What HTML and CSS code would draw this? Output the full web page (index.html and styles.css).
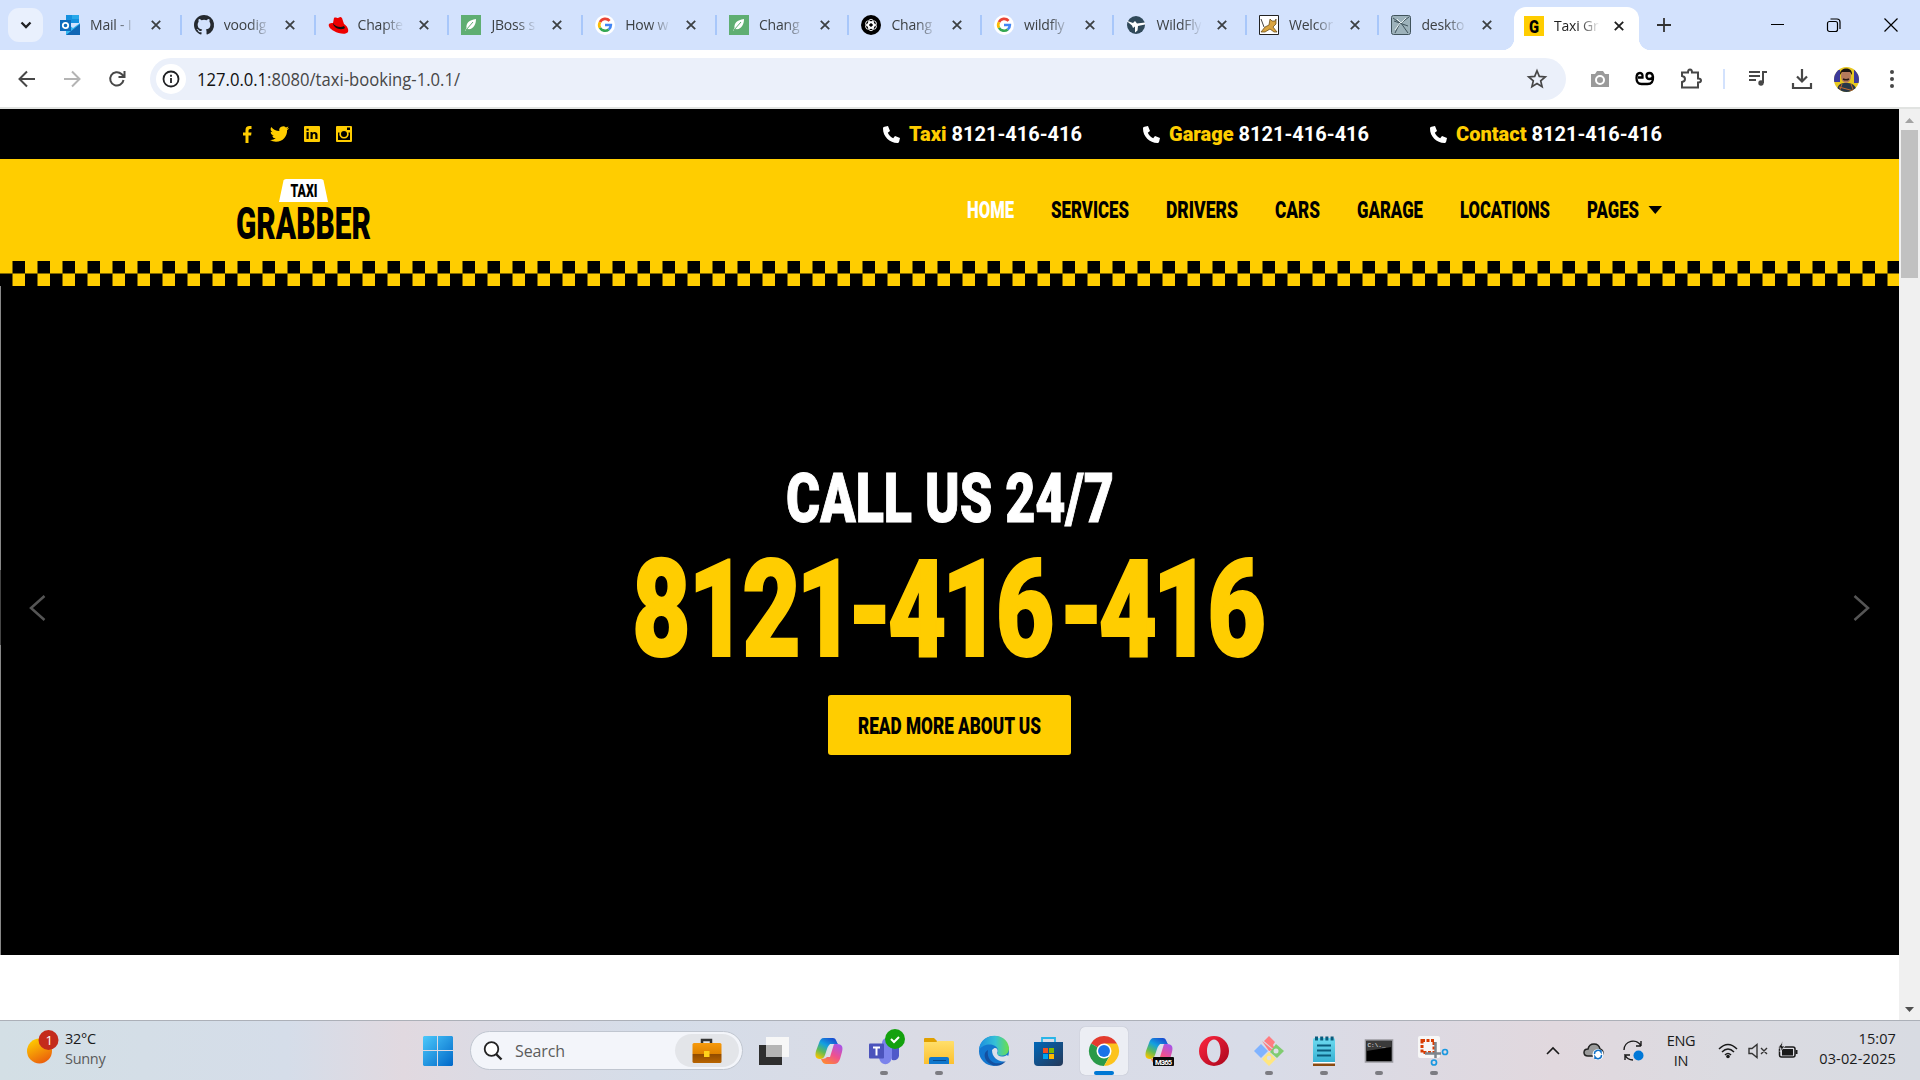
FILE: index.html
```html
<!DOCTYPE html>
<html lang="en">
<head>
<meta charset="utf-8">
<title>Taxi Grabber</title>
<link rel="stylesheet" href="styles.css">
</head>
<body>
<svg class="defs" width="0" height="0">
  <defs>
    <symbol id="x" viewBox="0 0 10 10"><path d="M.8.8l8.4 8.4M9.200.8L.8 9.200" stroke="currentColor" stroke-width="1.800" fill="none"/></symbol>
    <symbol id="google" viewBox="0 0 24 24"><circle cx="12" cy="12" r="12" fill="#fff"/><path d="M17.500 7A7 7 0 0 0 6 8.500" stroke="#ea4335" stroke-width="3.200" fill="none"/><path d="M6 8.500a7 7 0 0 0 0 7" stroke="#fbbc05" stroke-width="3.200" fill="none"/><path d="M6 15.500A7 7 0 0 0 16.500 17.300" stroke="#34a853" stroke-width="3.200" fill="none"/><path d="M12 12h7a7 7 0 0 1-2.500 5.300" stroke="#4285f4" stroke-width="3.200" fill="none"/></symbol>
    <symbol id="leaf" viewBox="0 0 20 20"><path d="M0 0h20v20H0z" fill="#5fae72"/><path d="M15 4C8 5 5 8 5.500 13L4 16l2.500-2C12 15 15 10 15 4z" fill="#fff"/><path d="M5 15l7-8" stroke="#5fae72"/></symbol>
    <symbol id="phone" viewBox="0 0 17 17"><path d="M1.500.8L5 0l2 5-2.200 1.800c1.200 2.600 2.800 4.200 5.400 5.400L12 10l5 2-.8 3.500C15.900 16.400 15.500 17 14.500 17 6.500 17 0 10.500 0 2.500c0-1 .6-1.500 1.500-1.700z" fill="#fff"/></symbol>
    <linearGradient id="blue" x2="1" y2="1"><stop stop-color="#4cc9fb"/><stop offset="1" stop-color="#0067c8"/></linearGradient>
    <linearGradient id="sun" x1=".2" x2=".7" y2="1"><stop stop-color="#ffd000"/><stop offset="1" stop-color="#ea5b0c"/></linearGradient>
    <linearGradient id="cpa" x1=".8" x2=".2" y2="1"><stop stop-color="#1748d0"/><stop offset=".4" stop-color="#14a0e0"/><stop offset=".7" stop-color="#60bb55"/><stop offset="1" stop-color="#f5c400"/></linearGradient>
    <linearGradient id="cpb" x1=".8" x2=".2" y2="1"><stop stop-color="#a855e8"/><stop offset=".5" stop-color="#ee5090"/><stop offset="1" stop-color="#ff8a30"/></linearGradient>
    <linearGradient id="fold" x2="0" y2="1"><stop stop-color="#ffdf6b"/><stop offset="1" stop-color="#fcc02f"/></linearGradient>
    <linearGradient id="edgea" x2="1"><stop stop-color="#1c8ee0"/><stop offset=".55" stop-color="#35c1d6"/><stop offset="1" stop-color="#6be04a"/></linearGradient>
    <linearGradient id="store" x2="1" y2="1"><stop stop-color="#0067b8"/><stop offset="1" stop-color="#253858"/></linearGradient>
    <linearGradient id="op" x2="1" y2="1"><stop stop-color="#ff2740"/><stop offset="1" stop-color="#a8061c"/></linearGradient>
    <linearGradient id="note" x2="0" y2="1"><stop stop-color="#6edbf0"/><stop offset="1" stop-color="#35b0d2"/></linearGradient>
    <linearGradient id="case" x2="0" y2="1"><stop stop-color="#f79a0c"/><stop offset=".53" stop-color="#e08300"/><stop offset=".54" stop-color="#8f4a00"/><stop offset="1" stop-color="#b86400"/></linearGradient>
    <symbol id="copilot" viewBox="0 0 30 30"><path d="M10 2h9c3 0 3 3 5 6h-6c-3 0-4 2-5 5l-2 6c-1 3-3 4-5 4-5 0-5-4-4-8l3-8c1-3 2-5 5-5z" fill="url(#cpa)"/><path d="M20 28h-8c-3 0-4-3-5-5 4 0 6-1 7-4l3-8c1-3 3-3 6-3 6 0 6 4 5 8l-2 7c-1 3-3 5-6 5z" fill="url(#cpb)"/><path d="M16 8h4l-4 13h-4c2-4 2-9 4-13z" fill="#dce0ea"/></symbol>
  </defs>
</svg>

<header class="tabstrip">
  <button class="tabsearch"><svg width="12" height="8" viewBox="0 0 12 8"><path d="M1.500 1.500L6 6l4.500-4.500" stroke="#202124" stroke-width="2.300" fill="none"/></svg></button>
  <div class="tab wide"><svg class="fav" viewBox="0 0 20 20"><path d="M6 0h13v8H6z" fill="#1490df"/><path d="M12 0h7v4h-7z" fill="#28a8ea"/><path d="M6 8l7 5 7-5v12H6z" fill="#35b8f1"/><path d="M6 20L20 9v11z" fill="#1066b5"/><path d="M0 5h11v11H0z" fill="#0f6cbd"/><circle cx="5.500" cy="10.500" r="2.700" stroke="#fff" stroke-width="1.800" fill="none"/></svg><span class="tt">Mail - I</span><svg class="cl"><use href="#x"/></svg></div>
  <div class="tab wide"><svg class="fav" viewBox="0 0 16 16"><path fill="#24292f" d="M8 0C3.580 0 0 3.580 0 8c0 3.540 2.290 6.530 5.470 7.590.4.070.55-.17.55-.38v-1.490c-2.010.37-2.530-.49-2.690-.94-.09-.23-.48-.94-.82-1.130-.28-.15-.68-.52-.01-.53.63-.01 1.080.58 1.230.82.72 1.210 1.870.87 2.330.66.07-.52.28-.87.51-1.070-1.780-.2-3.640-.89-3.640-3.950 0-.87.31-1.590.82-2.150-.08-.2-.36-1.020.08-2.120 0 0 .67-.21 2.200.82a7.400 7.400 0 0 1 4 0c1.530-1.040 2.200-.82 2.200-.82.44 1.100.16 1.920.08 2.120.51.56.82 1.270.82 2.150 0 3.070-1.870 3.750-3.650 3.950.29.25.54.73.54 1.480v2.200c0 .21.150.46.550.38A8 8 0 0 0 8 0z"/></svg><span class="tt">voodig</span><svg class="cl"><use href="#x"/></svg></div>
  <div class="tab wide"><svg class="fav" viewBox="0 0 20 20"><path d="M1 9c1-1 2-1 4-1l1-5c1-1 3 0 4 0s2-2 4 0l2 6c3 2 5 5 4 8-2 3-9 2-14-1-4-2-6-5-5-7z" fill="#e00"/><path d="M5 8c2 4 8 5 11 3l1 2c-4 3-12 0-12-5z" fill="#111"/></svg><span class="tt">Chapte</span><svg class="cl"><use href="#x"/></svg></div>
  <div class="tab wide"><svg class="fav"><use href="#leaf"/></svg><span class="tt">JBoss s</span><svg class="cl"><use href="#x"/></svg></div>
  <div class="tab wide"><svg class="fav"><use href="#google"/></svg><span class="tt">How w</span><svg class="cl"><use href="#x"/></svg></div>
  <div class="tab"><svg class="fav"><use href="#leaf"/></svg><span class="tt">Chang</span><svg class="cl"><use href="#x"/></svg></div>
  <div class="tab"><svg class="fav" viewBox="0 0 20 20"><circle cx="10" cy="10" r="10" fill="#000"/><g fill="none" stroke="#fff" stroke-width=".9"><rect x="7.700" y="4.300" width="4.600" height="9" rx="2.300"/><rect x="7.700" y="4.300" width="4.600" height="9" rx="2.300" transform="rotate(60 10 10)"/><rect x="7.700" y="4.300" width="4.600" height="9" rx="2.300" transform="rotate(120 10 10)"/><rect x="7.700" y="4.300" width="4.600" height="9" rx="2.300" transform="rotate(180 10 10)"/><rect x="7.700" y="4.300" width="4.600" height="9" rx="2.300" transform="rotate(240 10 10)"/><rect x="7.700" y="4.300" width="4.600" height="9" rx="2.300" transform="rotate(300 10 10)"/></g></svg><span class="tt">Chang</span><svg class="cl"><use href="#x"/></svg></div>
  <div class="tab"><svg class="fav" viewBox="0 0 20 20"><use href="#google"/></svg><span class="tt">wildfly</span><svg class="cl"><use href="#x"/></svg></div>
  <div class="tab"><svg class="fav" viewBox="0 0 20 20"><circle cx="10" cy="10" r="9" fill="#30495a"/><path d="M0 5.500l7 2.500 2-2 2 2.500 8-1v2l-7 1.500-.5 4.500-2.500 2 0-6-2 1.500-1-2.500z" fill="#fff"/></svg><span class="tt">WildFly</span><svg class="cl"><use href="#x"/></svg></div>
  <div class="tab"><svg class="fav" viewBox="0 0 20 20"><path d="M.5.5h19v19H.5z" fill="#fff" stroke="#222"/><path d="M2 17l4-5 4-2 1-6 2 2h3l1-2v5l-3 3 4 5h-3l-4-3-5 3z" fill="#d9a441" stroke="#5a4010" stroke-width=".7"/><path d="M2 4l3 8" stroke="#444"/></svg><span class="tt">Welcor</span><svg class="cl"><use href="#x"/></svg></div>
  <div class="tab last"><svg class="fav" viewBox="0 0 20 20"><rect x=".5" y=".5" width="19" height="19" rx="2" fill="#9db2bb" stroke="#40535c"/><path d="M2 3l7 5-5 10M18 2l-8 6 7 10M3 6l14 5" stroke="#40535c" fill="none"/><path d="M6 4l4 4 5-5M9 8l-5 7" stroke="#e8f0f2" fill="none"/></svg><span class="tt">deskto</span><svg class="cl"><use href="#x"/></svg></div>
  <div class="tab active"><svg class="fav" viewBox="0 0 20 20"><path d="M0 0h20v20H0z" fill="#ffcd00"/><text x="5" y="17" class="gicon" textLength="10" lengthAdjust="spacingAndGlyphs">G</text></svg><span class="tt">Taxi Gr</span><svg class="cl"><use href="#x"/></svg></div>
  <svg class="plus" width="14" height="14"><path d="M7 0v14M0 7h14" stroke="#333" stroke-width="1.800"/></svg>
  <div class="win">
    <svg width="13" height="14"><path d="M0 6.500h13" stroke="#000"/></svg>
    <svg width="14" height="14"><rect x=".5" y="3.500" width="10" height="10" rx="2" fill="none" stroke="#000" stroke-width="1.200"/><path d="M3.500 1h6.500q3 0 3 3v7" fill="none" stroke="#000" stroke-width="1.200"/></svg>
    <svg width="14" height="14"><path d="M.5.5l13 13M13.500.5l-13 13" stroke="#000" stroke-width="1.200"/></svg>
  </div>
</header>

<div class="toolbar">
  <svg class="nv" viewBox="0 0 20 20"><path d="M18 10H3M10 2.500L2.500 10l7.500 7.500" stroke="#474747" stroke-width="2" fill="none"/></svg>
  <svg class="nv" viewBox="0 0 20 20"><path d="M2 10h15M10 2.500l7.500 7.500-7.500 7.500" stroke="#b4b4b4" stroke-width="2" fill="none"/></svg>
  <svg class="nv" viewBox="0 0 20 20"><path d="M16.500 11a6.700 6.700 0 1 1-2-6l2.500 2.500M17.500 2v6h-6" stroke="#474747" stroke-width="2" fill="none"/></svg>
  <div class="omni">
    <span class="info"><svg width="18" height="18"><circle cx="9" cy="9" r="7.500" fill="none" stroke="#202124" stroke-width="1.800"/><path d="M9 8v5M9 4.800v2" stroke="#202124" stroke-width="1.800"/></svg></span>
    <svg class="url" width="270" height="30"><text x="0" y="21.500" textLength="263" lengthAdjust="spacingAndGlyphs"><tspan class="host">127.0.0.1</tspan>:8080/taxi-booking-1.0.1/</text></svg>
    <svg class="star" width="20" height="20" viewBox="0 0 20 20"><path d="M10 1.800l2.300 5.600 6 .5-4.600 4 1.400 5.900L10 14.600l-5.100 3.200 1.400-5.900-4.600-4 6-.5z" fill="none" stroke="#474747" stroke-width="1.700"/></svg>
  </div>
  <div class="ext">
    <svg width="20" height="20" viewBox="0 0 20 20"><path d="M1 5h4l2-3h6l2 3h4v13H1z" fill="#9a9a9a"/><circle cx="10" cy="11" r="4" fill="none" stroke="#fff" stroke-width="2"/></svg>
    <svg class="e2" width="20" height="20" viewBox="0 0 20 20"><path d="M3 8.500h4.500Q8 4 5 4 1.500 4 1.500 9q0 6 5 6h6q6 0 5.500-7-.5-4-3.500-4-3 0-3 3t3 3q3 0 3.500-3" fill="none" stroke="#000" stroke-width="2.300"/></svg>
    <svg class="e3" width="22" height="22" viewBox="0 0 22 22"><path d="M2 4.500h6q0-3 2-3t2 3h6v6q3 0 3 2t-3 2v5H2v-5.500q3-.5 3-3t-3-3z" fill="none" stroke="#474747" stroke-width="2"/></svg>
    <i class="vsep"></i>
    <svg class="e4" width="20" height="20" viewBox="0 0 20 20"><path d="M1 3h11M1 7h11M1 11h7M15 14V3h4" stroke="#474747" stroke-width="2" fill="none"/><circle cx="13" cy="14" r="2.700" fill="#474747"/></svg>
    <svg class="e5" width="20" height="20" viewBox="0 0 20 20"><path d="M10 0v12M5 7.500l5 5 5-5M1 14v5h18v-5" stroke="#474747" stroke-width="2.200" fill="none"/></svg>
    <svg class="e6" width="25" height="25" viewBox="0 0 25 25"><clipPath id="av"><circle cx="12.500" cy="12.500" r="12.500"/></clipPath><g clip-path="url(#av)"><path d="M0 0h25v25H0z" fill="#e8c820"/><path d="M0 3h6v12H0M20 2l5 6v8h-5" fill="#3c3a9c"/><path d="M3 25c0-8 4-9 9-9s10 1 11 9z" fill="#283848"/><ellipse cx="12" cy="9" rx="5" ry="7" fill="#b57a5c"/><path d="M6 8c-1-8 13-9 12 0l-2-3H8z" fill="#1a1414"/><path d="M9 12q3 1.500 6 0" stroke="#2a1a18" stroke-width="1.500" fill="none"/><path d="M5 20l15 4M8 17l-3 8M17 17l3 8" stroke="#c46a30"/></g></svg>
    <svg class="e7" width="6" height="20"><circle cx="3" cy="3" r="2" fill="#474747"/><circle cx="3" cy="10" r="2" fill="#474747"/><circle cx="3" cy="17" r="2" fill="#474747"/></svg>
  </div>
</div>

<main class="view">
  <div class="page">
    <div class="topbar">
      <div class="social">
        <svg width="9" height="17" viewBox="0 0 9 17"><path d="M2.500 17V9.500H0v-3h2.500V4Q2.500 0 6.500 0H8.500v3H7Q5.500 3 5.500 4.500v2h3l-.4 3H5.500V17z"/></svg>
        <svg class="tw" width="19" height="16" viewBox="0 0 24 20"><path d="M23.950 2.570a10 10 0 0 1-2.820.78A4.960 4.960 0 0 0 23.290.630c-.95.550-2 .95-3.130 1.180A4.920 4.920 0 0 0 11.780 6.300 13.980 13.980 0 0 1 1.640 1.160a4.920 4.920 0 0 0 1.520 6.570 4.900 4.900 0 0 1-2.230-.61v.06a4.920 4.920 0 0 0 3.950 4.830 5 5 0 0 1-2.210.08 4.940 4.940 0 0 0 4.600 3.420A9.870 9.870 0 0 1 0 17.540 14 14 0 0 0 7.560 19.750c9.050 0 14-7.500 14-13.980 0-.21 0-.42-.02-.63a9.940 9.940 0 0 0 2.460-2.550z"/></svg>
        <svg width="16" height="16" viewBox="0 0 16 16"><rect width="16" height="16" rx="1"/><path d="M2.500 6h2.200v7H2.500zM2.500 2.700h2.200v2H2.500zM6.500 6h2v1c1-1.700 5-1.700 5 1.800V13h-2.200V9.500c0-2.300-2.600-2.200-2.600 0V13H6.500z" fill="#000"/></svg>
        <svg width="16" height="16" viewBox="0 0 16 16"><path fill-rule="evenodd" d="M1 0h14q1 0 1 1v14q0 1-1 1H1q-1 0-1-1V1q0-1 1-1zm1 6.500V14h12V6.500h-1.500a4.700 4.700 0 1 1-9 0zM8 5a3 3 0 1 0 0 6 3 3 0 0 0 0-6zm3-3.500V4h3V1.500z"/></svg>
      </div>
      <div class="phones">
        <div class="ph"><svg width="17" height="17"><use href="#phone"/></svg><span><b>Taxi</b> 8121-416-416</span></div>
        <div class="ph"><svg width="17" height="17"><use href="#phone"/></svg><span><b>Garage</b> 8121-416-416</span></div>
        <div class="ph"><svg width="17" height="17"><use href="#phone"/></svg><span><b>Contact</b> 8121-416-416</span></div>
      </div>
    </div>
    <div class="mainnav">
      <svg class="logo" width="136" height="64" viewBox="0 0 136 64"><path d="M47.500 2.500Q48 1 50 1h35q2 0 2.500 1.500L92 24H43z" fill="#fff"/><text x="54.500" y="19" class="cond l1" textLength="27" lengthAdjust="spacingAndGlyphs">TAXI</text><text x="0" y="61" class="cond l2" textLength="135" lengthAdjust="spacingAndGlyphs">GRABBER</text></svg>
      <nav class="menu">
        <svg class="on" width="47" height="30"><text class="cond n" y="23" textLength="47" lengthAdjust="spacingAndGlyphs">HOME</text></svg>
        <svg width="78" height="30"><text class="cond n" y="23" textLength="78" lengthAdjust="spacingAndGlyphs">SERVICES</text></svg>
        <svg width="72" height="30"><text class="cond n" y="23" textLength="72" lengthAdjust="spacingAndGlyphs">DRIVERS</text></svg>
        <svg width="45" height="30"><text class="cond n" y="23" textLength="45" lengthAdjust="spacingAndGlyphs">CARS</text></svg>
        <svg width="66" height="30"><text class="cond n" y="23" textLength="66" lengthAdjust="spacingAndGlyphs">GARAGE</text></svg>
        <svg width="90" height="30"><text class="cond n" y="23" textLength="90" lengthAdjust="spacingAndGlyphs">LOCATIONS</text></svg>
        <svg width="75" height="30"><text class="cond n" y="23" textLength="52" lengthAdjust="spacingAndGlyphs">PAGES</text><path d="M61.500 11h13.500l-6.750 8z"/></svg>
      </nav>
    </div>
    <div class="checker"></div>
    <section class="hero">
      <svg width="18" height="28" viewBox="0 0 18 28"><path d="M15.500 2L2 14l13.500 12" fill="none" stroke="#555" stroke-width="2.500"/></svg>
      <div class="pitch">
        <svg class="h1" width="328" height="60"><text class="cond" y="54" textLength="328" lengthAdjust="spacingAndGlyphs">CALL US 24/7</text></svg>
        <svg class="h2" width="630" height="110"><text class="cond" transform="scale(.75 1)" y="102" x="-4 71 143 215 283 337 409 481 565 618 690 763">8121-416-416</text></svg>
        <a class="btn"><svg width="183" height="24"><text class="cond n" y="20.500" textLength="183" lengthAdjust="spacingAndGlyphs">READ MORE ABOUT US</text></svg></a>
      </div>
      <svg width="18" height="28" viewBox="0 0 18 28"><path d="M2.500 2L16 14 2.500 26" fill="none" stroke="#555" stroke-width="2.500"/></svg>
    </section>
  </div>
  <div class="scroll">
    <svg width="9" height="5"><path d="M0 5l4.500-5L9 5z" fill="#a3a3a3"/></svg>
    <div class="thumb"></div>
    <svg class="dn" width="9" height="5"><path d="M0 0h9L4.500 5z" fill="#505050"/></svg>
  </div>
</main>

<footer class="taskbar">
  <div class="weather">
    <svg width="36" height="44"><circle cx="13.500" cy="27" r="12.500" fill="url(#sun)"/><circle cx="22.500" cy="16" r="10" fill="#c42b1c"/><text class="badge" x="19.500" y="21">1</text></svg>
    <div class="two up"><span>32°C</span><span class="dim">Sunny</span></div>
  </div>
  <svg class="start" width="30" height="30" viewBox="0 0 30 30"><path d="M1 0h13v14H0V1zM15 0h14l1 1v13H15zM0 15h14v15H1l-1-1zM15 15h15v14l-1 1H15z" fill="url(#blue)"/></svg>
  <div class="search">
    <svg width="20" height="20" viewBox="0 0 20 20"><circle cx="8.500" cy="8" r="6.800" fill="#fff" stroke="#222" stroke-width="1.800"/><path d="M13 13l5.500 5.500" stroke="#222" stroke-width="2.400"/></svg>
    <span>Search</span>
    <div class="bubble"><svg width="30" height="26" viewBox="0 0 30 26"><path d="M10 6V2h9v4" fill="none" stroke="#333" stroke-width="2.500"/><rect x=".5" y="5" width="29" height="20" rx="1.500" fill="url(#case)"/><rect x="12" y="13" width="5.500" height="6" fill="#ffd21a"/></svg></div>
  </div>
  <div class="apps">
    <div class="app"><svg viewBox="0 0 30 30"><path d="M0 9h23v20H0z" fill="#2e2e2e"/><path d="M7 1h23v20H7z" fill="#f7f7f7"/><path d="M7 9h16v12H7z" fill="#b5b5b5"/></svg></div>
    <div class="app"><svg><use href="#copilot"/></svg></div>
    <div class="app run"><svg viewBox="0 0 30 30"><circle cx="18" cy="7" r="5" fill="#7b83eb"/><path d="M21 10h9v10q-1 5-7 4z" fill="#5059c9"/><path d="M10 10h13v12q-2 7-8 6-4-1-5-6z" fill="#7b83eb"/><rect y="7.500" width="15" height="15" rx="1" fill="#4b53bc"/><path d="M4 11.500h7M7.500 11.500v8" stroke="#fff" stroke-width="2"/></svg><svg class="tick" viewBox="0 0 20 20"><circle cx="10" cy="10" r="10" fill="#13a10e"/><path d="M6 10l3 3 5-5" stroke="#fff" stroke-width="2" fill="none"/></svg></div>
    <div class="app run"><svg viewBox="0 0 30 30"><path d="M0 3q0-1 1-1h9l3 3v4H0z" fill="#e0a000"/><path d="M0 6h12l2-1h15q1 0 1 1v22H0z" fill="url(#fold)"/><path d="M5 28v-5q0-2 2-2h16q2 0 2 2v5z" fill="#0f77cc"/><path d="M9 24.500h13" stroke="#064a8c"/></svg></div>
    <div class="app"><svg viewBox="0 0 30 30"><circle cx="15" cy="15" r="15" fill="#1377cf"/><path d="M0 14C1-4 28-5 30 12c0 7-6 9-11 7-2-1 0-2 0-4 0-8-14-9-19-1z" fill="url(#edgea)"/><path d="M9 14c-2 11 8 17 18 11-6 8-18 5-21-3-1-4 0-6 3-8z" fill="#1450a0"/><path d="M13 14c4-5 7 0 5 3 0 3 5 5 10 2l2 2-2 4c-8 2-15-3-15-11z" fill="#dbe0ea"/></svg></div>
    <div class="app"><svg viewBox="0 0 30 30"><path d="M8 7V2h13v5" fill="none" stroke="#29b5e8" stroke-width="1.800"/><path d="M0 6h29v20q0 4-4 4H4q-4 0-4-4z" fill="url(#store)"/><path d="M9 12h5v5H9z" fill="#f25022"/><path d="M15 12h5v5h-5z" fill="#7fba00"/><path d="M9 18h5v5H9z" fill="#00a4ef"/><path d="M15 18h5v5h-5z" fill="#ffb900"/></svg></div>
    <div class="app cur"><svg viewBox="0 0 48 48"><path d="M24 24L3.200 12A24 24 0 0 1 44.800 12z" fill="#e33b2e"/><path d="M24 24L3.200 12A24 24 0 0 0 24 48l10-18z" fill="#2a9a48"/><path d="M24 12h20.800A24 24 0 0 1 24 48l10.400-18z" fill="#fcc31c"/><circle cx="24" cy="24" r="12" fill="#fff"/><circle cx="24" cy="24" r="9.500" fill="#1a73e8"/></svg></div>
    <div class="app"><svg viewBox="0 0 30 30"><use href="#copilot" width="30" height="30"/><rect x="9" y="21" width="21" height="9" rx="1" fill="#0a0a0a"/><text class="m365" x="11" y="28.500" textLength="17">M365</text></svg></div>
    <div class="app"><svg viewBox="0 0 30 30"><path fill-rule="evenodd" d="M15 0a15 15 0 1 0 0 30 15 15 0 0 0 0-30zm0 3.500c4 0 6.500 5 6.500 11.500S19 26.500 15 26.500 8 21.500 8 15 11 3.500 15 3.500z" fill="url(#op)"/></svg></div>
    <div class="app run"><svg viewBox="0 0 30 30"><path d="M15 0l6 6-2 3 2 4-3-1-8-7z" fill="#ff7b80"/><path d="M8 5l11 9-4 1z" fill="#ff7b80"/><path d="M7 8l7 7-7 7-7-7z" fill="#80b3ff"/><path d="M22 8l8 7-7 7-7-6z" fill="#80cc70"/><path d="M15 16l7 7-7 7-7-7z" fill="#ffe680"/><circle cx="22" cy="15" r="2.500" fill="#dde0e8"/><circle cx="15" cy="22" r="2.200" fill="#dde0e8"/></svg></div>
    <div class="app run"><svg viewBox="0 0 30 30"><rect x="4" y="2" width="22" height="25" rx="1.500" fill="url(#note)"/><path d="M4 27h22v3H4z" fill="#8a4a10"/><path d="M4 26h22v1.500H4z" fill="#fff"/><path d="M8 9.500h14M8 14.500h14M8 19.500h14" stroke="#0b5c7d" stroke-width="1.800"/><path d="M6 2.500h19" stroke="#0b5c7d" stroke-width="4" stroke-dasharray="3 2.200"/></svg></div>
    <div class="app run"><svg viewBox="0 0 30 30"><path d="M1.500 4h27v22h-27z" fill="#000" stroke="#9a9aa0" stroke-width="1.600"/><path d="M2.500 5h25v6l-25 4z" fill="#3a3a3a"/><text class="cmd" x="3.500" y="11">C:\._</text></svg></div>
    <div class="app run"><svg viewBox="0 0 30 30"><rect x="-1" y="0" width="22" height="22" rx="2" fill="#f7f7f7"/><path d="M3 4.500h12v12H3z" fill="none" stroke="#d83b01" stroke-width="3" stroke-dasharray="3 1.500"/><path d="M16.500 6v16M6 17.500h16" stroke="#7d858c" stroke-width="2.500"/><circle cx="15" cy="26.500" r="2.500" fill="none" stroke="#1a98e0" stroke-width="1.700"/><circle cx="26" cy="16" r="2.500" fill="none" stroke="#1a98e0" stroke-width="1.700"/></svg></div>
  </div>
  <div class="tray">
    <svg class="t1" width="14" height="8"><path d="M1 7l6-6 6 6" fill="none" stroke="#1a1a1a" stroke-width="1.600"/></svg>
    <svg class="t2" width="21" height="20" viewBox="0 0 21 20"><path d="M5 15Q1 15 1 11.500T5 8q1-5 6-5t6 5q3 1 3 4 0 3-4 3z" fill="#9a9a9a" stroke="#222" stroke-width="1.500"/><circle cx="15" cy="13.500" r="5.500" fill="#fff"/><path d="M11.500 13a3.500 3.500 0 0 1 6.500-2v-2M18.500 14a3.500 3.500 0 0 1-6.500 2v2" fill="none" stroke="#1473c8" stroke-width="1.500"/></svg>
    <svg class="t3" width="21" height="21" viewBox="0 0 21 21"><path d="M1 10a9 9 0 0 1 17-4V1M18 6h-5M10 20a9 9 0 0 1-8-5h5M2 15v5" fill="none" stroke="#1a1a1a" stroke-width="1.400"/><circle cx="15.500" cy="15.500" r="5" fill="#0078d7"/></svg>
    <div class="two mid"><span>ENG</span><span>IN</span></div>
    <svg class="t4" width="20" height="16" viewBox="0 0 20 16"><path d="M1 6q9-9 18 0M4 9q6-6 12 0M7 12q3-3 6 0" fill="none" stroke="#1a1a1a" stroke-width="1.500"/><circle cx="10" cy="13.500" r="1.800" fill="#1a1a1a"/></svg>
    <svg class="t5" width="20" height="16" viewBox="0 0 20 16"><path d="M1 5.500h3l5-4v13l-5-4H1zM13 5l6 6M19 5l-6 6" fill="none" stroke="#333" stroke-width="1.400"/></svg>
    <svg class="t6" width="20" height="16" viewBox="0 0 20 16"><rect x="1.500" y="4" width="15.500" height="10" rx="2" fill="none" stroke="#1a1a1a" stroke-width="1.500"/><path d="M4 6h11v6.500H4zM17.500 7h2v4h-2z" fill="#1a1a1a"/><path d="M5-2L0 5h3l-1 4 5-6H4z" fill="#1a1a1a" stroke="#dbdbe1" stroke-width=".8"/></svg>
    <div class="two up right"><span>15:07</span><span>03-02-2025</span></div>
  </div>
</footer>
</body>
</html>
```
FILE: styles.css
```css
* { box-sizing: border-box; }
body { margin: 0; width: 1920px; height: 1080px; overflow: hidden; display: flex; flex-direction: column; background: #fff; font-family: "Open Sans", "Noto Sans", sans-serif; }
svg { display: block; flex: none; overflow: visible; }
.defs { position: absolute; }

.tabstrip { height: 50px; background: #d3e2fd; display: flex; align-items: center; flex: none; }
.tabsearch { width: 35px; height: 34px; margin: 0 5px 0 8px; padding: 0; border: 0; border-radius: 11px; background: #e9f0fd; display: flex; align-items: center; justify-content: center; }
.tab { width: 132.500px; height: 20px; padding-left: 12px; display: flex; align-items: center; border-right: 2px solid #a8c7fa; color: #3c4043; flex: none; }
.wide { width: 133.800px; }
.fav { width: 20px; height: 20px; }
.tt { width: 46px; margin-left: 10px; overflow: hidden; white-space: nowrap; font-size: 14px; letter-spacing: -.2px; line-height: 20px; -webkit-mask-image: linear-gradient(90deg, #000 55%, transparent); mask-image: linear-gradient(90deg, #000 55%, transparent); }
.cl { width: 10px; height: 10px; margin-left: 15px; }
.last { border-color: transparent; }
.active { position: relative; width: 125px; height: 43px; margin-top: 7px; margin-left: 2px; padding: 0 0 5px 10px; background: #fff; border: 0; border-radius: 12px 12px 0 0; color: #1f1f1f; }
.active .cl { margin-left: 14px; }
.active::before, .active::after { content: ""; position: absolute; bottom: 0; width: 12px; height: 12px; }
.active::before { left: -12px; background: radial-gradient(circle at 0 0, transparent 12px, #fff 12.500px); }
.active::after { right: -12px; background: radial-gradient(circle at 100% 0, transparent 12px, #fff 12.500px); }
.gicon { font: 900 19px Roboto, sans-serif; }
.plus { margin-left: 18px; }
.win { margin-left: auto; margin-right: 22px; display: flex; gap: 43px; }

.toolbar { height: 59px; flex: none; padding: 1px 25px 0 17px; display: flex; align-items: center; border-bottom: 2px solid #e1e3e1; background: #fff; }
.nv { width: 20px; height: 20px; margin-right: 25px; }
.omni { width: 1416px; height: 42px; flex: none; margin-left: -2px; padding: 0 19px 0 6px; border-radius: 21px; background: #ebf0fa; display: flex; align-items: center; }
.info { width: 30px; height: 30px; border-radius: 50%; background: #fff; display: flex; align-items: center; justify-content: center; margin-right: 11px; }
.url { font-size: 17.500px; fill: #474747; }
.host { fill: #111; }
.star { margin-left: auto; }
.ext { display: flex; align-items: center; padding-left: 24px; }
.e2, .e3 { margin-left: 25px; }
.vsep { width: 2px; height: 20px; margin-left: 21px; background: #d3e2fd; }
.e4 { margin-left: 23px; }
.e5 { margin-left: 24px; }
.e6 { margin-left: 22px; }
.e7 { margin-left: 30px; }

.view { height: 911px; flex: none; display: flex; }
.page { width: 1899px; }
.topbar { height: 50px; background: #000; padding: 0 237px 0 243px; display: flex; align-items: center; justify-content: space-between; }
.social { display: flex; align-items: center; gap: 16px; fill: #ffcd00; }
.tw { margin: 0 -1px 0 2px; }
.phones { display: flex; gap: 61px; }
.ph { display: flex; align-items: center; gap: 9px; color: #fff; font: 700 20px/24px Roboto, sans-serif; }
.ph b { color: #ffcd00; }
.mainnav { height: 102px; background: #ffcd00; padding: 0 237px 0 236px; display: flex; align-items: center; justify-content: space-between; }
.cond { font-family: Roboto, sans-serif; font-weight: 900; }
.n { font-size: 23px; }
.l1 { font-size: 18px; }
.l2 { font-size: 44px; }
.menu { display: flex; gap: 37px; }
.on { fill: #fff; }
.checker { height: 25px; background: linear-gradient(#806700, #806700) 0 12px / 100% 1px no-repeat, linear-gradient(90deg, #806700 1px, transparent 1px) 12px 0 / 25px 100%, repeating-conic-gradient(#000 0 25%, #ffcd00 0 50%) 0 0 / 25px 25px; }
.hero { height: 669px; background: linear-gradient(#888 284px, #444 284px 359px, #888 359px) 0 0 / 1px 100% no-repeat #000; padding: 0 29px; display: flex; align-items: flex-start; justify-content: space-between; }
.hero > svg { margin-top: 308px; }
.pitch { display: flex; flex-direction: column; align-items: center; padding-top: 182px; }
.h1 { fill: #fff; stroke: #fff; font-size: 68px; stroke-width: 1px; }
.h2 { fill: #ffcd00; stroke: #ffcd00; stroke-width: 2px; font-size: 135px; margin-top: 26px; }
.btn { width: 243px; height: 60px; margin-top: 31px; border-radius: 3px; background: #ffcd00; display: flex; align-items: center; justify-content: center; }
.scroll { width: 21px; background: #f0f0f0; padding: 9px 0 8px; display: flex; flex-direction: column; align-items: center; }
.thumb { width: 17px; height: 148px; margin-top: 7px; background: #c1c1c1; }
.dn { margin-top: auto; }

.taskbar { height: 60px; flex: none; border-top: 1px solid #acb0b8; display: flex; align-items: center; background: linear-gradient(90deg, #d3dfe5 0, #d5dde9 15%, #e1d9e0 21%, #dcdbe4 25%, #d5dde9 34%, #dadbe5 48%, #d8dce8 65%, #e1d8de 81%, #dbdbe1 90%, #d8dbe2 100%); font-size: 14.500px; color: #1a1a1a; }
.weather { width: 423px; flex: none; padding-left: 26px; display: flex; align-items: center; gap: 3px; }
.weather > svg { margin-top: -9px; }
.badge { fill: #fff; font-size: 13px; }
.two { display: flex; flex-direction: column; line-height: 20px; letter-spacing: -.3px; }
.up { margin-top: -3px; }
.dim { color: #5a5a5a; }
.search { width: 273px; flex: none; height: 39px; margin-left: 17px; padding: 0 3px 0 12px; border-radius: 20px; border: 1px solid #c0c6d0; background: #f3f5fa; display: flex; align-items: center; font-size: 16px; color: #5c5c5c; }
.search span { margin-left: 12px; letter-spacing: -.1px; }
.bubble { width: 64px; height: 33px; margin-left: auto; border-radius: 17px; background: #e3e5e9; display: flex; align-items: center; justify-content: center; }
.apps { display: flex; flex: none; margin-left: 7px; }
.app { position: relative; width: 48px; height: 48px; flex: none; margin-right: 7px; border-radius: 5px; display: flex; align-items: center; justify-content: center; }
.app > svg { width: 30px; height: 30px; }
.app > .tick { position: absolute; width: 20px; height: 20px; left: 25px; top: 2px; }
.run::after, .cur::after { content: ""; position: absolute; bottom: 0; width: 8px; height: 4px; border-radius: 2px; background: #7c7c82; }
.cur { background: #eceef4; box-shadow: 0 0 1px #a0a4b0; }
.cur::after { width: 20px; background: #0078d4; }
.m365 { font: 700 7.500px Roboto, sans-serif; fill: #fff; }
.cmd { font: 6px "Liberation Mono", monospace; fill: #eee; }
.tray { margin-left: auto; margin-right: 24px; flex: none; display: flex; align-items: center; }
.t1 { margin-right: 23px; }
.t2 { margin-right: 19px; }
.t3 { margin-right: 22px; }
.mid { width: 30px; align-items: center; margin-right: 22px; }
.t4, .t5 { margin-right: 10px; }
.right { width: 98px; align-items: flex-end; letter-spacing: .1px; }
```
